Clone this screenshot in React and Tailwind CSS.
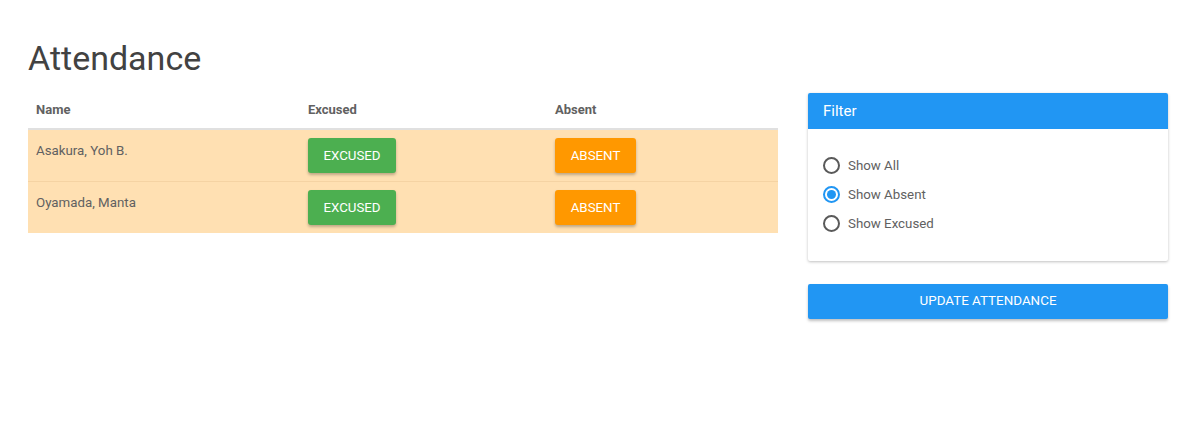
import { useState } from "react";

const students = [
  { id: 1, name: "Asakura, Yoh B." },
  { id: 2, name: "Oyamada, Manta" },
];

const filters = ["Show All", "Show Absent", "Show Excused"];

const Radio = ({ checked }) => (
  <span
    className={
      "flex h-[17px] w-[17px] shrink-0 items-center justify-center rounded-full border-2 " +
      (checked ? "border-[#2196f3]" : "border-[#5a5a5a]")
    }
  >
    {checked && <span className="h-[9px] w-[9px] rounded-full bg-[#2196f3]" />}
  </span>
);

const App = () => {
  const [filter, setFilter] = useState("Show Absent");

  return (
    <div
      className="min-h-[428px] bg-white px-[28px] pt-[38px] text-[#616161]"
      style={{ fontFamily: "Roboto, 'Liberation Sans', sans-serif" }}
    >
      <h1 className="text-[34px] leading-[40px] font-normal text-[#424242]">Attendance</h1>

      <div className="mt-[15px] flex items-start gap-[30px]">
        {/* attendance table */}
        <div className="w-[750px]">
          <div className="flex h-[37px] border-b-2 border-[#e0e0e0] pt-[7px] text-[13px] font-bold">
            <div className="w-[272px] pl-[8px]">Name</div>
            <div className="w-[247px] pl-[8px]">Excused</div>
            <div className="flex-1 pl-[8px]">Absent</div>
          </div>
          {students.map((s, i) => (
            <div
              key={s.id}
              className={
                "flex bg-[#ffe0b2] pt-[8px] text-[13.3px] " +
                (i === 0 ? "h-[52px] border-b border-[#f5d3a3]" : "h-[51px]")
              }
            >
              <div className="w-[272px] pl-[8px] pt-[3px]">{s.name}</div>
              <div className="w-[247px] pl-[8px]">
                <button className="h-[35px] w-[88px] rounded-[3px] bg-[#4caf50] text-[13.3px] text-white shadow-[0_2px_3px_rgba(0,0,0,0.25)]">
                  EXCUSED
                </button>
              </div>
              <div className="flex-1 pl-[8px]">
                <button className="h-[35px] w-[81px] rounded-[3px] bg-[#ff9800] text-[13.3px] text-white shadow-[0_2px_3px_rgba(0,0,0,0.25)]">
                  ABSENT
                </button>
              </div>
            </div>
          ))}
        </div>

        {/* filter panel */}
        <div className="flex w-[360px] flex-col gap-[23px]">
          <div className="overflow-hidden rounded-[2px] bg-white shadow-[0_1px_3px_rgba(0,0,0,0.25)]">
            <div className="flex h-[36px] items-center bg-[#2196f3] px-[15px] text-[15px] text-white">
              Filter
            </div>
            <div className="flex flex-col gap-[12px] px-[15px] pt-[28px] pb-[29px]">
              {filters.map((f) => (
                <label
                  key={f}
                  className="flex h-[17px] cursor-pointer items-center gap-[8px] text-[13.3px] text-[#616161]"
                  onClick={() => setFilter(f)}
                >
                  <Radio checked={filter === f} />
                  {f}
                </label>
              ))}
            </div>
          </div>

          <button className="h-[35px] w-full rounded-[2px] bg-[#2196f3] text-[13.4px] text-white shadow-[0_2px_3px_rgba(0,0,0,0.25)]">
            UPDATE ATTENDANCE
          </button>
        </div>
      </div>
    </div>
  );
};

export default App;
